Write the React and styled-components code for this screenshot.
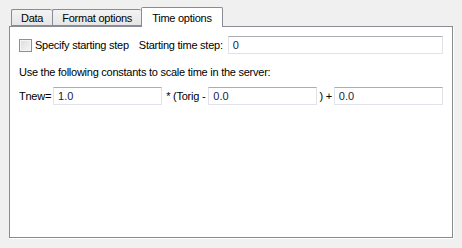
import React from "react";
import styled, { createGlobalStyle } from "styled-components";

const Global = createGlobalStyle`
  html, body {
    margin: 0;
    padding: 0;
    background: #f0f0f0;
  }
  body {
    font-family: "Liberation Sans", Arial, sans-serif;
    font-size: 11px;
    letter-spacing: -0.25px;
    color: #000;
  }
`;

const Window = styled.div`
  width: 462px;
  height: 248px;
  box-sizing: border-box;
  padding: 6px 9px 0 9px;
  background: #f0f0f0;
`;

const TabBar = styled.div`
  display: flex;
  align-items: flex-end;
  height: 20px;
  padding-left: 2px;
  position: relative;
  z-index: 1;
`;

const Tab = styled.div`
  box-sizing: border-box;
  height: ${(p) => (p.$active ? "20px" : "17px")};
  padding: 0 ${(p) => (p.$active ? "10px" : "9px")};
  margin-bottom: ${(p) => (p.$active ? "-1px" : "0")};
  display: flex;
  align-items: center;
  border: 1px solid #898c95;
  border-bottom: ${(p) => (p.$active ? "none" : "1px solid #898c95")};
  border-right: ${(p) => (p.$active ? "1px solid #898c95" : "none")};
  background: ${(p) => (p.$active ? "#ffffff" : "linear-gradient(#f3f3f3, #e6e6e6)")};
  border-radius: 2px 2px 0 0;
  color: #000;
  white-space: nowrap;
`;

const Pane = styled.div`
  box-sizing: border-box;
  width: 444px;
  height: 212px;
  background: #fff;
  border: 1px solid #898c95;
  border-right-color: #8a8a8a;
  border-bottom-color: #8a8a8a;
  box-shadow: 1px 1px 0 #ffffff;
  padding: 9px 9px 0 9px;
  display: flex;
  flex-direction: column;
`;

const Row = styled.div`
  display: flex;
  align-items: center;
  height: 18px;
  margin-bottom: ${(p) => p.$mb || 0}px;
`;

const Check = styled.span`
  box-sizing: border-box;
  width: 13px;
  height: 13px;
  margin-right: 3px;
  border: 1px solid #8e8f8f;
  background: linear-gradient(135deg, #dcdcdc, #f6f6f6);
  box-shadow: inset 0 0 0 1px #f4f4f4;
`;

const Label = styled.span`
  white-space: nowrap;
  margin-right: ${(p) => p.$mr || 0}px;
  margin-left: ${(p) => p.$ml || 0}px;
`;

const Field = styled.div`
  box-sizing: border-box;
  flex: 1;
  height: 18px;
  border: 1px solid #e2e3ea;
  border-top-color: #abadb3;
  background: #fff;
  padding: 0 4px;
  display: flex;
  align-items: center;
  color: #1b1b3f;
  letter-spacing: 0;
`;

const Text = styled.div`
  height: 18px;
  display: flex;
  align-items: center;
  margin-bottom: 6px;
`;

export default function App() {
  return (
    <>
      <Global />
      <Window>
        <TabBar>
          <Tab>Data</Tab>
          <Tab>Format options</Tab>
          <Tab $active>Time options</Tab>
        </TabBar>
        <Pane>
          <Row $mb={9}>
            <Check />
            <Label $mr={10}>Specify starting step</Label>
            <Label $mr={5}>Starting time step:</Label>
            <Field>0</Field>
          </Row>
          <Text>Use the following constants to scale time in the server:</Text>
          <Row>
            <Label $mr={2}>Tnew=</Label>
            <Field>1.0</Field>
            <Label $ml={4} $mr={3}>* (Torig -</Label>
            <Field>0.0</Field>
            <Label $ml={2} $mr={2}>) +</Label>
            <Field>0.0</Field>
          </Row>
        </Pane>
      </Window>
    </>
  );
}
